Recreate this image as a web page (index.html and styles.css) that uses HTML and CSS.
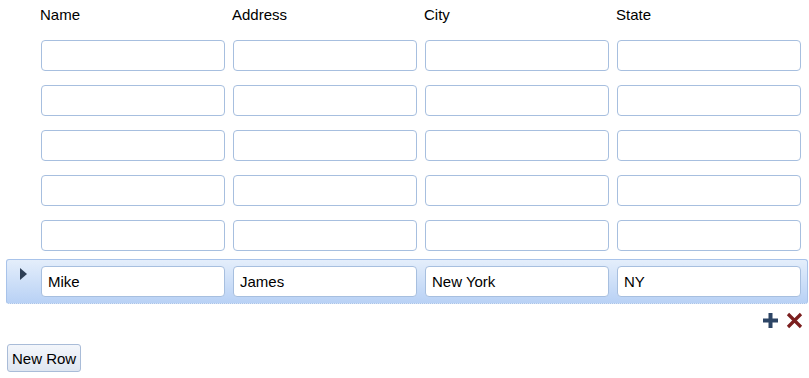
FILE: index.html
```
<!DOCTYPE html>
<html lang="en">
<head>
    <meta charset="UTF-8" />
    <title>Grid Editor</title>
    <link rel="stylesheet" href="styles.css">
</head>
<body>
    <div class="grid">
        <div class="grid-head">
            <span class="lead"></span>
            <span class="col">Name</span>
            <span class="col">Address</span>
            <span class="col">City</span>
            <span class="col">State</span>
        </div>

        <div class="row">
            <span class="lead"></span>
            <input type="text" /><input type="text" /><input type="text" /><input type="text" />
        </div>
        <div class="row">
            <span class="lead"></span>
            <input type="text" /><input type="text" /><input type="text" /><input type="text" />
        </div>
        <div class="row">
            <span class="lead"></span>
            <input type="text" /><input type="text" /><input type="text" /><input type="text" />
        </div>
        <div class="row">
            <span class="lead"></span>
            <input type="text" /><input type="text" /><input type="text" /><input type="text" />
        </div>
        <div class="row">
            <span class="lead"></span>
            <input type="text" /><input type="text" /><input type="text" /><input type="text" />
        </div>
        <div class="row selected">
            <span class="lead"><span class="arrow"></span></span>
            <input type="text" value="Mike" /><input type="text" value="James" /><input type="text" value="New York" /><input type="text" value="NY" />
        </div>

        <div class="row-tools">
            <svg width="17" height="17" viewBox="0 0 17 17">
                <path d="M6.5 1h4v5.5H16v4h-5.5V16h-4v-5.5H1v-4h5.5z" fill="#2d4565" />
            </svg>
            <svg width="17" height="17" viewBox="0 0 17 17">
                <path d="M2 2l13 13M15 2L2 15" stroke="#7b1f1f" stroke-width="3.2" />
            </svg>
        </div>
    </div>

    <button class="new-row">New Row</button>
</body>
</html>
```

FILE: styles.css
```
body {
    font-family: "Liberation Sans", Arial, sans-serif;
    font-size: 15px;
    color: #000;
    background: #fff;
    margin: 0;
    padding: 0 1px 0 6px;
}
.grid {
    width: 802px;
}
.grid-head {
    display: flex;
    gap: 8px;
    height: 33px;
    padding-top: 6px;
    box-sizing: border-box;
}
.grid-head .col {
    width: 184px;
}
.lead {
    width: 26px;
    flex: none;
    display: flex;
}
.row {
    display: flex;
    gap: 8px;
    height: 45px;
    padding: 6px 6px 0 0;
    box-sizing: border-box;
    border: 1px solid transparent;
}
.row input {
    width: 184px;
    height: 31px;
    box-sizing: border-box;
    border: 1px solid #a7bfdf;
    border-radius: 4px;
    padding: 0 6px;
    font-family: inherit;
    font-size: 15px;
    color: #000;
    background: #fff;
    outline: none;
}
.row.selected {
    margin-top: 1px;
    border: 1px solid #a8c3ea;
    border-bottom: 1px dotted #9dbbe6;
    border-radius: 3px;
    background: linear-gradient(#e4eefb, #b8d1f5);
}
.arrow {
    margin: 2px 0 0 13px;
    width: 0;
    height: 0;
    border-top: 6px solid transparent;
    border-bottom: 6px solid transparent;
    border-left: 7px solid #2d3e55;
}
.row-tools {
    display: flex;
    justify-content: flex-end;
    align-items: center;
    gap: 7px;
    height: 32px;
    padding-right: 5px;
}
.new-row {
    margin: 8px 0 0 1px;
    height: 28px;
    padding: 0 4px;
    font-family: inherit;
    font-size: 15px;
    color: #000;
    background: linear-gradient(#f3f6fb, #dfe6f1);
    border: 1px solid #a9bcd8;
    border-radius: 3px;
}
```
